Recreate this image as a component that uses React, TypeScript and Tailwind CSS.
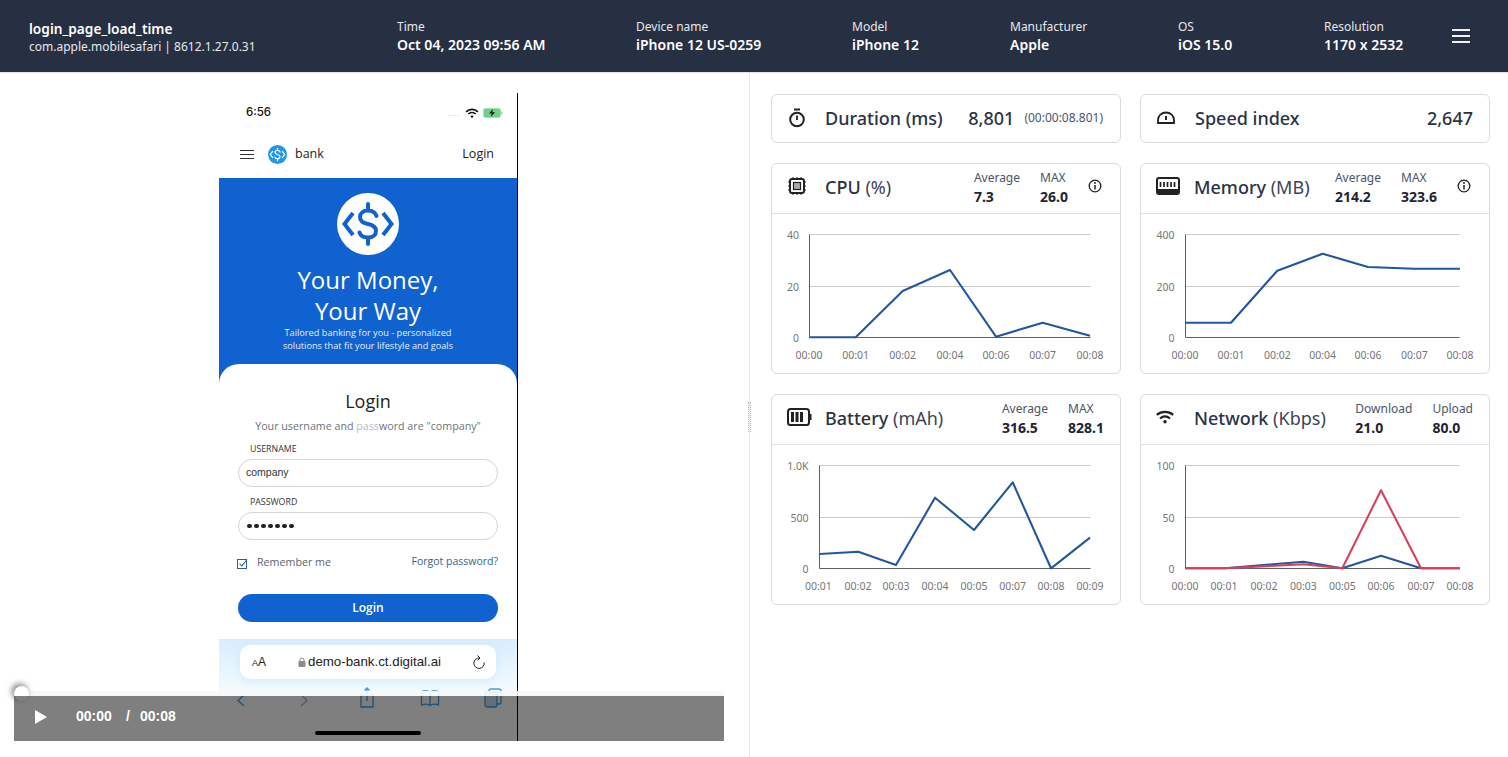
import React from "react";

interface ChartProps {
  yLabels: string[];
  yEnd: number;
  axisX: number;
  ticks: { x: number; label: string }[];
  lines: { color: string; points: string }[];
}

const TOP = 20.5;
const MID = 72.5;
const ZERO = 123.5;
const RIGHT = 318.5;

function Chart({ yLabels, yEnd, axisX, ticks, lines }: ChartProps) {
  return (
    <svg width="348" height="159" className="block">
      <line x1={axisX} x2={RIGHT} y1={TOP} y2={TOP} stroke="#c9c9c9" />
      <line x1={axisX} x2={RIGHT} y1={MID} y2={MID} stroke="#c9c9c9" />
      <line x1={axisX} x2={RIGHT} y1={ZERO} y2={ZERO} stroke="#5f5f5f" />
      <line x1={axisX} x2={axisX} y1={TOP} y2={ZERO} stroke="#5f5f5f" />
      {yLabels.map((label, i) => (
        <text
          key={label}
          x={yEnd}
          y={[24.5, 76.5, 127.5][i]}
          textAnchor="end"
          fontSize="10.5"
          fill="#757575"
        >
          {label}
        </text>
      ))}
      {ticks.map((t) => (
        <text
          key={t.label}
          x={t.x}
          y="144.5"
          textAnchor="middle"
          fontSize="10.5"
          fill="#757575"
        >
          {t.label}
        </text>
      ))}
      {lines.map((l) => (
        <polyline
          key={l.color}
          points={l.points}
          fill="none"
          stroke={l.color}
          strokeWidth="2.1"
          strokeLinejoin="round"
        />
      ))}
    </svg>
  );
}

function Stat({ label, value }: { label: string; value: string }) {
  return (
    <div>
      <div className="text-[12px] leading-[18px] text-[#4a5568]">{label}</div>
      <div className="text-[14px] leading-[19px] font-bold text-[#1f2430]">{value}</div>
    </div>
  );
}

function InfoIcon() {
  return (
    <svg width="14" height="14" viewBox="0 0 14 14" className="mr-[2px] mb-[4px] ml-[20px]" fill="none" stroke="#222">
      <circle cx="7" cy="7" r="5.8" strokeWidth="1.3" />
      <path d="M7 6 V10.400" strokeWidth="1.500" />
      <circle cx="7" cy="4" r="0.9" fill="#222" stroke="none" />
    </svg>
  );
}

function MetricCard({
  icon,
  title,
  unit,
  stats,
  info,
  chart,
}: {
  icon: React.ReactNode;
  title: string;
  unit: string;
  stats: [string, string][];
  info?: boolean;
  chart: ChartProps;
}) {
  return (
    <div className="h-[211px] rounded-md border border-[#d8dbdf] bg-white">
      <div className="flex h-[50px] items-center border-b border-[#dfe1e4] pr-[16px] pb-[2px] pl-[15px]">
        <div className="mb-[4px] flex w-[38px] items-center">{icon}</div>
        <div className="mb-[2px] text-[18px] leading-6 text-[#2a3346]">
          <span className="font-medium">{title}</span> <span className="text-[#3b4456]">{unit}</span>
        </div>
        <div className="ml-auto flex items-center gap-5">
          {stats.map(([l, v]) => (
            <Stat key={l} label={l} value={v} />
          ))}
        </div>
        {info && <InfoIcon />}
      </div>
      <Chart {...chart} />
    </div>
  );
}

function HeaderItem({ label, value, className }: { label: string; value: string; className: string }) {
  return (
    <div className={className}>
      <div className="text-[12px] leading-[18px] text-[#e6e8ec]">{label}</div>
      <div className="text-[14px] leading-[18px] font-semibold text-white">{value}</div>
    </div>
  );
}

function BankLogo({ size, bg, fg }: { size: number; bg: string; fg: string }) {
  return (
    <svg width={size} height={size} viewBox="0 0 62 62">
      <circle cx="31" cy="31" r="31" fill={bg} />
      <path
        d="M16 20 L7.500 31 L16 42 M46 20 L54.500 31 L46 42"
        fill="none"
        stroke={fg}
        strokeWidth="4"
      />
      <path
        d="M39.500 23 C38 19 34.500 17.500 31 17.500 C26 17.500 23 20.500 23 24 C23 28 26 30 31 31 C36 32 39 34 39 38 C39 42 36 44.500 31 44.500 C27 44.500 23.500 43 22.500 39.500 M31 11 V17.500 M31 44.500 V51"
        fill="none"
        stroke={fg}
        strokeWidth="4"
        strokeLinecap="round"
      />
    </svg>
  );
}

function PhoneScreen() {
  return (
    <div className="ml-[205px] h-[648px] w-[299px] border-r border-black bg-white font-['Open_Sans',sans-serif]">
      <div className="flex h-[40px] items-center pr-[14px] pl-[27px]">
        <span className="font-['Inter',sans-serif] text-[11.5px] font-medium text-[#111]">6:56</span>
        <span className="ml-auto text-[8px] leading-none tracking-[1px] text-[#bbb]">....</span>
        <svg width="14" height="11" viewBox="0 0 14 11" className="ml-[5px]" fill="none" stroke="#111" strokeWidth="1.6">
          <path d="M1 3.800 C4.500 .6 9.500 .6 13 3.800 M3.200 6 C5.300 4.200 8.700 4.200 10.800 6" />
          <path d="M5.200 8 L7 10.200 L8.800 8 C7.800 7.200 6.200 7.200 5.200 8 Z" fill="#111" stroke="none" />
        </svg>
        <svg width="20" height="10" viewBox="0 0 20 10" className="ml-[4px]">
          <rect x=".5" y=".5" width="17" height="9" rx="2" fill="#6fd08c" stroke="#a8dcb8" />
          <rect x="18" y="3.500" width="1.500" height="3" fill="#9ed8ae" />
          <path d="M10 1 L6 5.600 H8.800 L7.800 9 L12 4.200 H9.200 Z" fill="#111" />
        </svg>
      </div>
      <div className="flex h-[45px] items-center pr-[23px] pb-[2px] pl-[21px]">
        <div className="flex w-[14px] flex-col gap-[3px]">
          <span className="h-px bg-[#333]" />
          <span className="h-px bg-[#333]" />
          <span className="h-px bg-[#333]" />
        </div>
        <div className="ml-[14px]">
          <BankLogo size={19} bg="#1f97ee" fg="#ffffff" />
        </div>
        <span className="ml-[8px] text-[12.5px] text-[#222]">bank</span>
        <span className="ml-auto text-[12.5px] text-[#222]">Login</span>
      </div>
      <div className="bg-[#0f62cf]">
        <div className="flex h-[186px] flex-col items-center pt-[15px] text-white">
          <BankLogo size={62} bg="#ffffff" fg="#0f62cf" />
          <div className="mt-[9px] text-center text-[24px] leading-[31px] font-medium">
            Your Money,
            <br />
            Your Way
          </div>
          <div className="text-center text-[9.2px] leading-[13px] text-[#e6eefb]">
            Tailored banking for you - personalized
            <br />
            solutions that fit your lifestyle and goals
          </div>
        </div>
        <div className="h-[275px] rounded-t-[20px] bg-white px-[19px] pt-[24px]">
          <div className="text-center text-[18px] leading-[26px] text-[#222]">Login</div>
          <div className="mt-[5px] text-center text-[10.7px] leading-[14px] text-[#6f7378]">
            Your username and <span className="text-[#b9bcc0]">pass</span>word are "company"
          </div>
          <div className="mt-[10px] pl-[12px] text-[8.8px] leading-[12px] font-medium text-[#333]">USERNAME</div>
          <div className="mt-[4px] flex h-[28px] items-center rounded-full border border-[#d5d5d5] pl-[7px] font-['Liberation_Sans',sans-serif] text-[10.5px] text-[#333]">
            company
          </div>
          <div className="mt-[9px] pl-[12px] text-[8.8px] leading-[12px] font-medium text-[#333]">PASSWORD</div>
          <div className="mt-[4px] flex h-[28px] items-center gap-[2.500px] rounded-full border border-[#d5d5d5] pl-[8px]">
            {[0, 1, 2, 3, 4, 5, 6].map((i) => (
              <span key={i} className="h-[4.500px] w-[4.500px] rounded-full bg-[#222]" />
            ))}
          </div>
          <div className="mt-[14px] flex items-center">
            <svg width="11" height="11" viewBox="0 0 11 11" className="mt-[3px] -ml-px" fill="none" stroke="#2f5f8a">
              <rect x=".5" y="1.500" width="9" height="9" />
              <path d="M2.500 5.500 L4.800 8 L10 1.500" strokeWidth="1.100" />
            </svg>
            <span className="ml-[9px] text-[10.7px] text-[#5b6470]">Remember me</span>
            <span className="mb-px ml-auto text-[10.5px] text-[#2f6490]">Forgot password?</span>
          </div>
          <div className="mt-[23px] flex h-[28px] items-center justify-center rounded-full bg-[#0f62cf] text-[12px] font-semibold text-white">
            Login
          </div>
        </div>
      </div>
      <div className="h-[102px] bg-gradient-to-b from-[#d6eefc] to-[#ffffff] to-70% pt-[6px]">
        <div className="mx-[21px] flex h-[34px] items-center rounded-[10px] bg-white pr-[10px] pl-[12px] font-['Liberation_Sans',sans-serif] text-[#222] shadow-[0_2px_8px_rgba(190,225,250,0.6)]">
          <span className="w-[46px] text-[12px]">
            <span className="text-[9px]">A</span>A
          </span>
          <svg width="8" height="10" viewBox="0 0 8 10" className="mr-[2px]">
            <rect x=".5" y="4" width="7" height="6" rx="1" fill="#8a8a92" />
            <path d="M2 4.500 V3 a2 2 0 0 1 4 0 V4.500" fill="none" stroke="#8a8a92" />
          </svg>
          <span className="text-[13.300px]">demo-bank.ct.digital.ai</span>
          <svg width="14" height="15" viewBox="0 0 14 15" className="ml-auto" fill="none" stroke="#222" strokeWidth="1">
            <path d="M7.500 3 A5.200 5.200 0 1 0 12.200 7.500" />
            <path d="M5.500 .5 L8 3 L5.500 5.500" />
          </svg>
        </div>
        <div className="mt-[7px] flex items-start justify-between pr-[14px] pl-[12px]">
          <svg width="20" height="26" viewBox="0 0 20 26" fill="none" stroke="#4a9ad8" strokeWidth="1.300">
            <path d="M13 9 L7 14.500 L13 20" />
          </svg>
          <svg width="20" height="26" viewBox="0 0 20 26" fill="none" stroke="#a5b5c2" strokeWidth="1.300">
            <path d="M7 9 L13 14.500 L7 20" />
          </svg>
          <svg width="20" height="26" viewBox="0 0 20 26" fill="none" stroke="#4a9ad8" strokeWidth="1.300">
            <path d="M7 9 H4 V21 H16 V9 H13 M10 15 V2 M7.500 4.500 L10 2 L12.500 4.500" />
          </svg>
          <svg width="20" height="26" viewBox="0 0 20 26" fill="none" stroke="#4a9ad8" strokeWidth="1.300">
            <path d="M10 6 C8 4.500 4 4.500 1.500 5.500 V19 C4 18 8 18 10 19.500 C12 18 16 18 18.500 19 V5.500 C16 4.500 12 4.500 10 6 Z M10 6 V19.500" />
          </svg>
          <svg width="20" height="26" viewBox="0 0 20 26" fill="none" stroke="#4a9ad8" strokeWidth="1.300">
            <rect x="6" y="3" width="12" height="15" rx="2" />
            <rect x="2" y="6" width="12" height="15" rx="2" fill="#c9dcec" />
          </svg>
        </div>
      </div>
    </div>
  );
}

function VideoControls() {
  return (
    <div className="absolute inset-x-0 bottom-0">
      <div className="relative h-[5px] bg-[#f7f7f7]/90">
        <span className="absolute top-[-5px] left-0 h-[15px] w-[15px] rounded-full bg-white shadow-[-2px_-2px_6px_rgba(0,0,0,0.55)]" />
      </div>
      <div className="relative flex h-[45px] items-center bg-black/50 pb-[4px] pl-[21px] text-[14px] font-semibold text-white">
        <svg width="12" height="14" viewBox="0 0 12 14">
          <path d="M0 0 L12 7 L0 14 Z" fill="#ffffff" />
        </svg>
        <span className="ml-[29px] w-[50px] font-['Liberation_Sans',sans-serif]">00:00</span>
        <span className="w-[14px] font-['Liberation_Sans',sans-serif]">/</span>
        <span className="font-['Liberation_Sans',sans-serif]">00:08</span>
        <span className="absolute bottom-[6px] left-[301px] h-[4px] w-[106px] rounded-full bg-black" />
      </div>
    </div>
  );
}

export default function App() {
  return (
    <div className="flex h-screen flex-col overflow-hidden bg-white font-['Noto_Sans',sans-serif]">
      <header className="flex h-[73px] shrink-0 items-center border-b border-[#e2e4e8] bg-[#272f42] pl-[29px] text-white">
        <div className="w-[368px] pt-[2px]">
          <div className="text-[13.700px] leading-[19px] font-semibold">login_page_load_time</div>
          <div className="text-[12px] leading-[18px] text-[#e6e8ec]">com.apple.mobilesafari | 8612.1.27.0.31</div>
        </div>
        <HeaderItem className="w-[239px]" label="Time" value="Oct 04, 2023 09:56 AM" />
        <HeaderItem className="w-[216px]" label="Device name" value="iPhone 12 US-0259" />
        <HeaderItem className="w-[158px]" label="Model" value="iPhone 12" />
        <HeaderItem className="w-[168px]" label="Manufacturer" value="Apple" />
        <HeaderItem className="w-[146px]" label="OS" value="iOS 15.0" />
        <HeaderItem className="w-[128px]" label="Resolution" value="1170 x 2532" />
        <div className="flex w-[18px] flex-col gap-[4px]">
          <span className="h-[2px] bg-[#f1f1f1]" />
          <span className="h-[2px] bg-[#f1f1f1]" />
          <span className="h-[2px] bg-[#f1f1f1]" />
        </div>
      </header>
      <main className="flex min-h-0 flex-1">
        <section className="relative w-[750px] shrink-0 border-r border-[#e5e7ea] pt-[20px] pl-[14px]">
          <div className="relative h-[648px] w-[710px]">
            <PhoneScreen />
            <VideoControls />
          </div>
          <span className="absolute top-[329px] right-[-2px] h-[30px] w-[3px] border-x border-dotted border-[#bbbbbb]" />
        </section>
        <section className="grid flex-1 grid-cols-[350px_350px] content-start gap-x-[19px] gap-y-[20px] pt-[21px] pl-[21px]">
          <div className="flex h-[49px] items-center rounded-md border border-[#d8dbdf] pr-[17px] pb-[2px] pl-[15px] text-[#2a3346]">
            <div className="flex w-[38px] items-center">
              <svg width="20" height="20" viewBox="0 0 20 20" fill="none" stroke="#222" strokeWidth="2">
                <circle cx="10" cy="11.500" r="6.800" />
                <path d="M7 1.500 H13" />
                <path d="M10 7.500 V12" strokeWidth="1.800" />
              </svg>
            </div>
            <span className="text-[18px] leading-6 font-medium">Duration (ms)</span>
            <span className="ml-auto text-[18px] leading-6 font-medium">8,801</span>
            <span className="ml-[10px] text-[12px] text-[#4a5568]">(00:00:08.801)</span>
          </div>
          <div className="flex h-[49px] items-center rounded-md border border-[#d8dbdf] pr-[16px] pb-[2px] pl-[15px] text-[#2a3346]">
            <div className="flex w-[39px] items-center">
              <svg width="20" height="20" viewBox="0 0 20 20" fill="none" stroke="#222" strokeWidth="1.800">
                <path d="M2 15 V12 A8 7.500 0 0 1 18 12 V15 Z" />
                <path d="M10 8 V12" strokeWidth="2" />
              </svg>
            </div>
            <span className="text-[18px] leading-6 font-medium">Speed index</span>
            <span className="ml-auto text-[18px] leading-6 font-medium">2,647</span>
          </div>
          <MetricCard
            icon={
              <svg width="20" height="20" viewBox="0 0 20 20" fill="none" stroke="#222">
                <rect x="3" y="3" width="14" height="14" rx="2" strokeWidth="2" />
                <rect x="6.500" y="6.500" width="7" height="7" fill="#aaaaaa" strokeWidth="1.200" />
                <path d="M6 1 V3 M10 1 V3 M14 1 V3 M6 17 V19 M10 17 V19 M14 17 V19 M1 6 H3 M1 10 H3 M1 14 H3 M17 6 H19 M17 10 H19 M17 14 H19" strokeWidth="1" />
              </svg>
            }
            title="CPU"
            unit="(%)"
            info
            stats={[
              ["Average", "7.3"],
              ["MAX", "26.0"],
            ]}
            chart={{
              yLabels: ["40", "20", "0"],
              yEnd: 27,
              axisX: 37.5,
              ticks: [
                { x: 37, label: "00:00" },
                { x: 83.7, label: "00:01" },
                { x: 130.7, label: "00:02" },
                { x: 178, label: "00:04" },
                { x: 224, label: "00:06" },
                { x: 270.7, label: "00:07" },
                { x: 318, label: "00:08" },
              ],
              lines: [
                {
                  color: "#22579f",
                  points: "37.5,123.3 83.7,123.3 130.7,77 178,56 224,122.7 270.7,108.7 318,121.7",
                },
              ],
            }}
          />
          <MetricCard
            icon={
              <svg width="24" height="20" viewBox="0 0 24 20" fill="none">
                <rect x="1" y="2" width="22" height="16" rx="2" stroke="#222" strokeWidth="2" />
                <rect x="1" y="13" width="22" height="5" fill="#222" />
                <path d="M4.500 6 V11 M8 6 V11 M11.500 6 V11 M15 6 V11 M18.500 6 V11" stroke="#222" strokeWidth="1.700" />
              </svg>
            }
            title="Memory"
            unit="(MB)"
            info
            stats={[
              ["Average", "214.2"],
              ["MAX", "323.6"],
            ]}
            chart={{
              yLabels: ["400", "200", "0"],
              yEnd: 33.5,
              axisX: 44.5,
              ticks: [
                { x: 44, label: "00:00" },
                { x: 90, label: "00:01" },
                { x: 136.3, label: "00:02" },
                { x: 181.7, label: "00:04" },
                { x: 227, label: "00:06" },
                { x: 273.3, label: "00:07" },
                { x: 319, label: "00:08" },
              ],
              lines: [
                {
                  color: "#22579f",
                  points: "44.5,108.7 90,108.7 136.3,56.7 181.7,39.7 227,53 273.3,54.7 319,54.7",
                },
              ],
            }}
          />
          <MetricCard
            icon={
              <svg width="25" height="18" viewBox="0 0 25 18" fill="none">
                <rect x="1" y="1" width="21" height="16" rx="2.500" stroke="#222" strokeWidth="2" />
                <rect x="22" y="6" width="2.500" height="6" fill="#222" />
                <path d="M5.500 4 V14 M10 4 V14 M14.500 4 V14" stroke="#222" strokeWidth="3" />
              </svg>
            }
            title="Battery"
            unit="(mAh)"
            stats={[
              ["Average", "316.5"],
              ["MAX", "828.1"],
            ]}
            chart={{
              yLabels: ["1.0K", "500", "0"],
              yEnd: 36.5,
              axisX: 47.5,
              ticks: [
                { x: 46.3, label: "00:01" },
                { x: 86, label: "00:02" },
                { x: 124, label: "00:03" },
                { x: 163, label: "00:04" },
                { x: 202, label: "00:05" },
                { x: 240.7, label: "00:07" },
                { x: 279, label: "00:08" },
                { x: 318, label: "00:09" },
              ],
              lines: [
                {
                  color: "#22579f",
                  points: "47.5,109 86.3,106.7 124,120 163,52.700 202,85 240.7,37.3 279,123.3 318,92.7",
                },
              ],
            }}
          />
          <MetricCard
            icon={
              <svg width="18" height="14" viewBox="0 0 18 14" fill="none" stroke="#222" strokeWidth="2.200">
                <path d="M.8 4.800 C5.500 .8 12.500 .8 17.200 4.800" />
                <path d="M4 8.500 C7 6 11 6 14 8.500" />
                <circle cx="9" cy="11.800" r="1.700" fill="#222" stroke="none" />
              </svg>
            }
            title="Network"
            unit="(Kbps)"
            stats={[
              ["Download", "21.0"],
              ["Upload", "80.0"],
            ]}
            chart={{
              yLabels: ["100", "50", "0"],
              yEnd: 33.5,
              axisX: 44.5,
              ticks: [
                { x: 44, label: "00:00" },
                { x: 83, label: "00:01" },
                { x: 123, label: "00:02" },
                { x: 162.3, label: "00:03" },
                { x: 201.3, label: "00:05" },
                { x: 240, label: "00:06" },
                { x: 280, label: "00:07" },
                { x: 319, label: "00:08" },
              ],
              lines: [
                {
                  color: "#22579f",
                  points: "44.5,123.3 84,123.3 162.3,116.7 201.3,123.3 240,110.7 280,123.3 319,123.3",
                },
                {
                  color: "#d8405f",
                  points: "44.5,123.3 84,123.3 162.3,119.3 201.3,123.3 240,45.3 280,123.3 319,123.3",
                },
              ],
            }}
          />
        </section>
      </main>
    </div>
  );
}
